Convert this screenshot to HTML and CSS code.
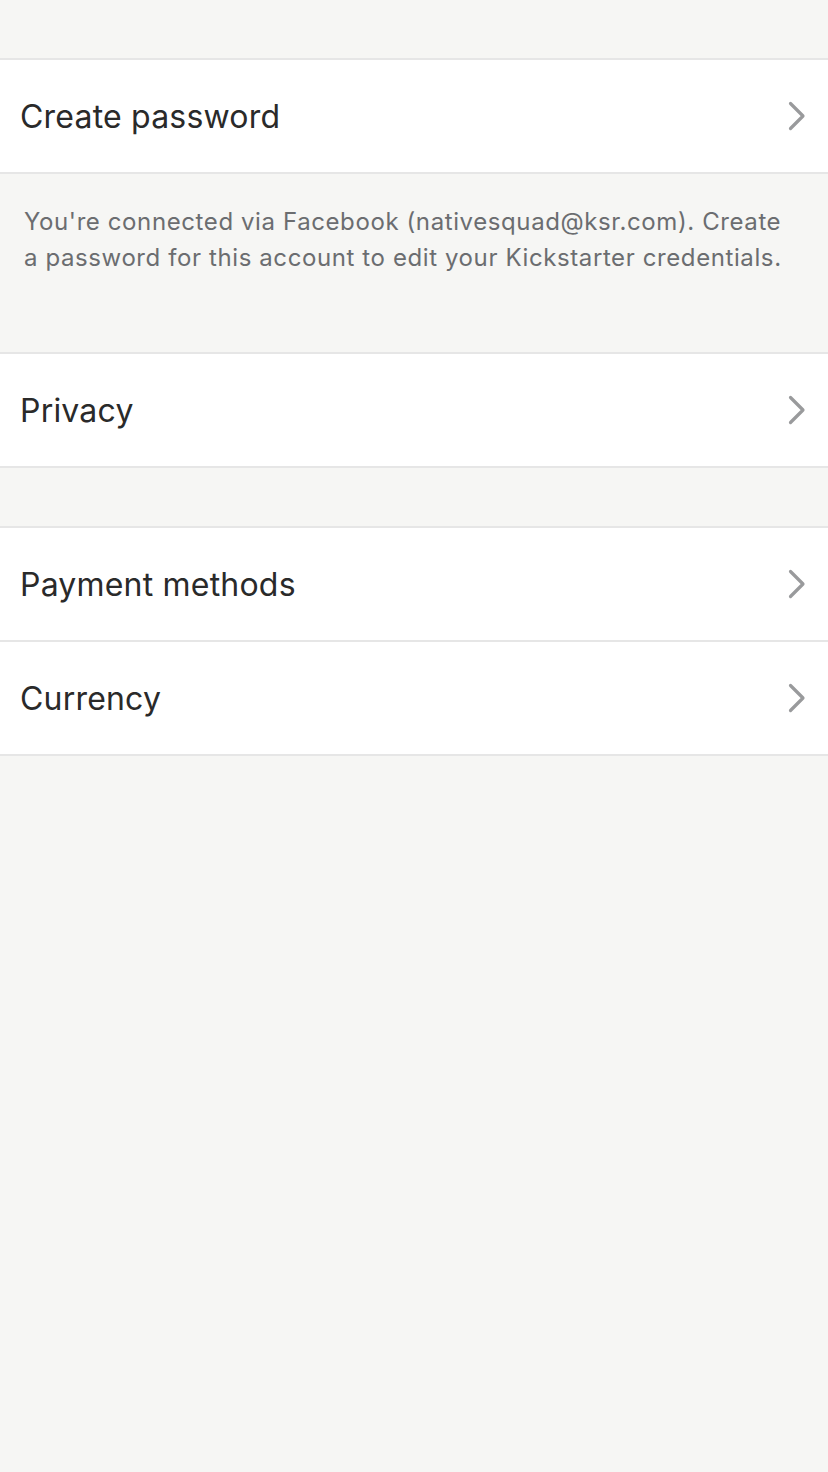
FILE: index.html
```html
<!DOCTYPE html>
<html>
<head>
<meta charset="utf-8">
<link rel="stylesheet" href="styles.css">
</head>
<body>
<div class="screen">
  <section class="group first">
    <div class="row"><span class="label">Create password</span><svg class="chev" width="18" height="30" viewBox="0 0 18 30"><path d="M2.5 2.5 L15 15 L2.5 27.5" fill="none" stroke="#999a9c" stroke-width="3.2" stroke-linecap="round" stroke-linejoin="round"/></svg></div>
  </section>
  <p class="note">You're connected via Facebook (nativesquad@ksr.com). Create a password for this account to edit your Kickstarter credentials.</p>
  <section class="group">
    <div class="row"><span class="label">Privacy</span><svg class="chev" width="18" height="30" viewBox="0 0 18 30"><path d="M2.5 2.5 L15 15 L2.5 27.5" fill="none" stroke="#999a9c" stroke-width="3.2" stroke-linecap="round" stroke-linejoin="round"/></svg></div>
  </section>
  <section class="group third">
    <div class="row"><span class="label">Payment methods</span><svg class="chev" width="18" height="30" viewBox="0 0 18 30"><path d="M2.5 2.5 L15 15 L2.5 27.5" fill="none" stroke="#999a9c" stroke-width="3.2" stroke-linecap="round" stroke-linejoin="round"/></svg></div>
    <div class="row"><span class="label">Currency</span><svg class="chev" width="18" height="30" viewBox="0 0 18 30"><path d="M2.5 2.5 L15 15 L2.5 27.5" fill="none" stroke="#999a9c" stroke-width="3.2" stroke-linecap="round" stroke-linejoin="round"/></svg></div>
  </section>
</div>
</body>
</html>
```
FILE: styles.css
```css
html, body {
  margin: 0;
  padding: 0;
  background: #f6f6f4;
}
.screen {
  width: 828px;
  min-height: 1472px;
  background: #f6f6f4;
  font-family: Inter, "Noto Sans", sans-serif;
  padding-top: 58px;
  box-sizing: border-box;
}
.group {
  background: #fff;
  border-top: 2px solid #e6e6e6;
  border-bottom: 2px solid #e6e6e6;
}
.third {
  margin-top: 58px;
}
.row {
  height: 112px;
  display: flex;
  align-items: center;
  justify-content: space-between;
  padding: 0 21px 0 20px;
}
.row + .row {
  border-top: 2px solid #e6e6e6;
}
.label {
  font-size: 32px;
  color: #2a2a2a;
  letter-spacing: 0.2px;
}
.chev {
  display: block;
  margin-right: 1px;
}
.note {
  margin: 0;
  padding: 30px 34px 0 24px;
  height: 178px;
  box-sizing: border-box;
  font-size: 24px;
  line-height: 36px;
  letter-spacing: 0.6px;
  color: #6b6d70;
}
```
